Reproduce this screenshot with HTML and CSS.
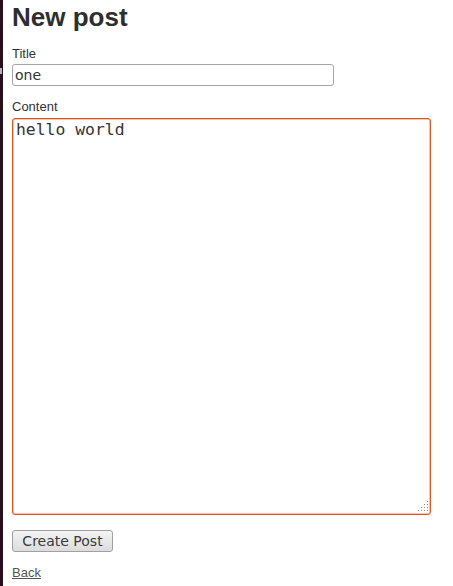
FILE: index.html
```html
<!DOCTYPE html>
<html>
<head>
<meta charset="utf-8">
<link rel="stylesheet" href="styles.css">
</head>
<body>
<div class="frame">
  <div class="strip"><span class="strip-mark"></span></div>
  <main class="page">
    <h1 class="title">New post</h1>
    <form class="form">
      <label class="label" for="post_title">Title</label>
      <input class="text-input" id="post_title" type="text" value="one">
      <label class="label label-content" for="post_content">Content</label>
      <div class="area-wrap">
        <textarea class="text-area" id="post_content">hello world</textarea>
        <svg class="grip" width="10" height="10" viewBox="0 0 10 10">
          <g fill="#8a8a8a">
            <rect x="9" y="0" width="1" height="1"/>
            <rect x="6" y="3" width="1" height="1"/><rect x="9" y="3" width="1" height="1"/>
            <rect x="3" y="6" width="1" height="1"/><rect x="6" y="6" width="1" height="1"/><rect x="9" y="6" width="1" height="1"/>
            <rect x="0" y="9" width="1" height="1"/><rect x="3" y="9" width="1" height="1"/><rect x="6" y="9" width="1" height="1"/><rect x="9" y="9" width="1" height="1"/>
          </g>
        </svg>
      </div>
      <div class="actions">
        <button class="button" type="button">Create Post</button>
      </div>
    </form>
    <a class="back" href="#">Back</a>
  </main>
</div>
</body>
</html>
```
FILE: styles.css
```css
html, body {
  margin: 0;
  padding: 0;
  background: #ffffff;
}
body {
  font-family: "Liberation Sans", Arial, sans-serif;
  color: #333333;
  overflow: hidden;
}
.frame {
  display: flex;
  min-height: 586px;
}
.strip {
  width: 3px;
  background: #2c0f1f;
  flex: none;
  position: relative;
}
.strip-mark {
  position: absolute;
  left: 0;
  top: 68px;
  width: 2px;
  height: 6px;
  background: #b8b0b4;
}
.page {
  padding-left: 9px;
  flex: 1;
}
.title {
  font-size: 26px;
  font-weight: bold;
  line-height: 30px;
  margin: 2px 0 14px 0;
  color: #2e2e2e;
}
.form {
  display: flex;
  flex-direction: column;
  align-items: flex-start;
}
.label {
  font-size: 13px;
  line-height: 15px;
  color: #333333;
  margin-bottom: 3px;
}
.label-content {
  margin-top: 13px;
  margin-bottom: 4px;
}
.text-input {
  box-sizing: border-box;
  width: 322px;
  height: 22px;
  margin: 0;
  padding: 0 2px;
  border: 1px solid #a4a4a4;
  border-radius: 3px;
  font-family: "DejaVu Sans", sans-serif;
  font-size: 14px;
  color: #333333;
  outline: none;
}
.area-wrap {
  position: relative;
  width: 419px;
  height: 397px;
}
.text-area {
  box-sizing: border-box;
  display: block;
  width: 419px;
  height: 397px;
  margin: 0;
  padding: 1px 3px;
  border: 1px solid #e2541f;
  box-shadow: inset 0 0 0 0.5px #ee8a60;
  border-radius: 3px;
  font-family: "DejaVu Sans Mono", monospace;
  font-size: 16.4px;
  line-height: 20px;
  color: #333333;
  resize: none;
  outline: none;
}
.grip {
  position: absolute;
  right: 3px;
  bottom: 4px;
}
.actions {
  margin-top: 15px;
}
.button {
  box-sizing: border-box;
  width: 101px;
  height: 22px;
  margin: 0;
  padding: 0;
  border: 1px solid #a0a0a0;
  border-radius: 3px;
  background: linear-gradient(#f4f4f4, #dcdcdc);
  font-family: "DejaVu Sans", sans-serif;
  font-size: 14px;
  color: #3a3a3a;
}
.back {
  display: inline-block;
  margin-top: 13px;
  font-size: 13px;
  line-height: 15px;
  color: #555555;
  text-decoration: underline;
}
```
